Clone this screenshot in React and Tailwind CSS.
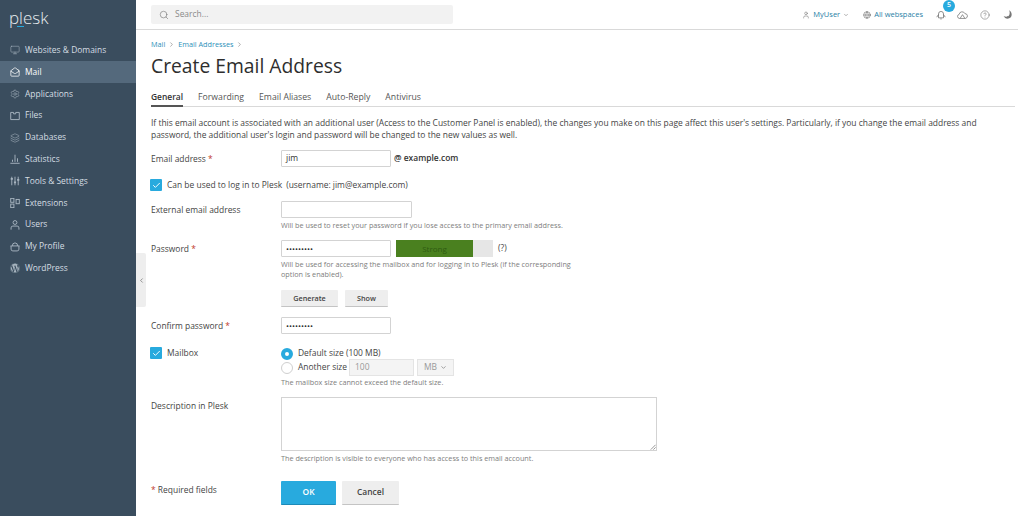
import React from 'react';
import {
  Monitor,
  MailOpen,
  Settings,
  Layers,
  User,
  Globe,
  CircleHelp,
  Search,
  ChevronDown,
  ChevronRight,
  ChevronLeft,
  Check,
} from 'lucide-react';
import { FaWordpress } from 'react-icons/fa';

function FilesIcon(props) {
  return (
    <svg viewBox="0 0 14 14" fill="none" stroke="currentColor" strokeWidth="1" {...props}>
      <path d="M1 2h4v2h3V2h5v10H1z" />
    </svg>
  );
}

function StatsIcon(props) {
  return (
    <svg viewBox="0 0 14 14" fill="none" stroke="currentColor" strokeWidth="1" {...props}>
      <path d="M0.5 13h13M3.5 11V8M7 11V1M10.5 11V6" />
    </svg>
  );
}

function ToolsIcon(props) {
  return (
    <svg viewBox="0 0 14 14" fill="none" stroke="currentColor" strokeWidth="1" {...props}>
      <path d="M2.5 1v12M7 1v12M11.5 1v12" />
      <path d="M1 4h3M5.5 9h3M10 5.5h3" strokeWidth="2.4" />
    </svg>
  );
}

function ExtensionsIcon(props) {
  return (
    <svg viewBox="0 0 14 14" fill="none" stroke="currentColor" strokeWidth="1" {...props}>
      <rect x="1" y="0.5" width="4.5" height="5.5" />
      <rect x="1" y="8.5" width="4.5" height="5" />
      <rect x="8.5" y="2" width="4.5" height="6" />
    </svg>
  );
}

function UsersIcon(props) {
  return (
    <svg viewBox="0 0 14 14" fill="none" stroke="currentColor" strokeWidth="1" {...props}>
      <circle cx="7" cy="3.5" r="2.7" />
      <path d="M1.5 13.5V11a2.5 2.5 0 0 1 2.5-2.5h6a2.5 2.5 0 0 1 2.5 2.5v2.5" />
    </svg>
  );
}

function ProfileIcon(props) {
  return (
    <svg viewBox="0 0 14 14" fill="none" stroke="currentColor" strokeWidth="1" {...props}>
      <path d="M0.7 5.5h12.6M1.5 5.5v4.5a2.5 2.5 0 0 0 2.5 2.5h6a2.5 2.5 0 0 0 2.5-2.5V5.5" />
      <path d="M3.5 5.5 4 2.5 7 1.2l3 1.3.5 3" />
    </svg>
  );
}

function NotifyIcon(props) {
  return (
    <svg viewBox="0 0 14 14" fill="none" stroke="currentColor" strokeWidth="1" {...props}>
      <path d="M3.5 11V5.5a3.5 3.5 0 0 1 7 0V11z" />
      <path d="M3.5 6.5 1 10M10.5 6.5 13 10M6 12.5h2" />
    </svg>
  );
}

function CloudIcon(props) {
  return (
    <svg viewBox="0 0 16 14" fill="none" stroke="currentColor" strokeWidth="1" {...props}>
      <path d="M4.5 12H3.5a3 3 0 0 1-.4-5.900A4.400 4.400 0 0 1 11.5 5a3.500 3.500 0 0 1 1.300 6.800L11.500 12" />
      <path d="M8 6.500 11.500 12H4.500z" />
    </svg>
  );
}

function MoonIcon(props) {
  return (
    <svg viewBox="0 0 14 14" fill="currentColor" {...props}>
      <path d="M9.500 0.500C12 1.800 13.500 4.200 13.500 7a6.500 6.500 0 0 1-12.500 2.500c3 1.300 7 1.200 8.300-1C10.700 6.300 10.800 3 9.500 0.500z" />
    </svg>
  );
}

function ResizeGrip(props) {
  return (
    <svg viewBox="0 0 8 8" fill="none" stroke="#777" strokeWidth="1" {...props}>
      <path d="M7.500 1 1 7.500M7.500 4.500 4.500 7.500" />
    </svg>
  );
}

const navItems = [
  { label: 'Websites & Domains', icon: Monitor },
  { label: 'Mail', icon: MailOpen, active: true },
  { label: 'Applications', icon: Settings },
  { label: 'Files', icon: FilesIcon },
  { label: 'Databases', icon: Layers },
  { label: 'Statistics', icon: StatsIcon },
  { label: 'Tools & Settings', icon: ToolsIcon },
  { label: 'Extensions', icon: ExtensionsIcon },
  { label: 'Users', icon: UsersIcon },
  { label: 'My Profile', icon: ProfileIcon },
  { label: 'WordPress', icon: FaWordpress },
];

const tabs = ['General', 'Forwarding', 'Email Aliases', 'Auto-Reply', 'Antivirus'];

function Sidebar() {
  return (
    <aside className="w-[136px] shrink-0 bg-[#3a4d5e] text-[#d5dde3]">
      <div className="h-[39.5px] pl-[9px] pt-[6px] relative">
        <span className="text-[17px] leading-[24px] font-light text-[#e8edf0]">plesk</span>
        <span className="absolute left-[17px] top-[26px] w-[7px] h-[1px] bg-[#28aade]"></span>
      </div>
      <nav>
        {navItems.map((item) => {
          const Icon = item.icon;
          return (
            <div
              key={item.label}
              className={`flex items-center h-[21.8px] pl-[10px] gap-[5px] text-[8.45px] ${item.active ? 'bg-[#54697c] text-white' : ''}`}
            >
              <Icon className={`w-[10px] h-[10px] shrink-0 ${item.active ? 'text-white' : 'text-[#a9b6c1]'}`} strokeWidth={item.active ? 1.8 : 1.3} />
              <span>{item.label}</span>
            </div>
          );
        })}
      </nav>
    </aside>
  );
}

function TopBar() {
  return (
    <header className="h-[30px] shrink-0 border-b border-[#d9d9d9] flex items-center pl-[15px] pr-[6px] bg-white">
      <div className="w-[302px] h-[19px] bg-[#f2f2f2] rounded-[2px] flex items-center pl-[8px] gap-[6px] text-[8.45px] text-[#8a8a8a]">
        <Search className="w-[10px] h-[10px] text-[#777]" strokeWidth={1.5} />
        <span>Search...</span>
      </div>
      <div className="ml-auto flex items-center text-[7.5px] text-[#2a7fa6]">
        <User className="w-[8px] h-[8px] text-[#666] mr-[3px]" strokeWidth={1.5} />
        <span>MyUser</span>
        <ChevronDown className="w-[6px] h-[6px] text-[#666] ml-[3px]" />
        <Globe className="w-[8px] h-[8px] text-[#555] ml-[14px] mr-[3px]" strokeWidth={1.5} />
        <span>All webspaces</span>
        <div className="relative ml-[13px]">
          <NotifyIcon className="w-[10px] h-[10px] text-[#666]" />
          <span className="absolute -top-[10px] left-[7px] w-[12px] h-[12px] rounded-full bg-[#28aade] text-white text-[7px] font-semibold flex items-center justify-center">5</span>
        </div>
        <CloudIcon className="w-[11px] h-[10px] text-[#666] ml-[11px]" />
        <CircleHelp className="w-[10px] h-[10px] text-[#666] ml-[12px]" strokeWidth={1.3} />
        <MoonIcon className="w-[9px] h-[9px] text-[#777] ml-[13px]" />
      </div>
    </header>
  );
}

function Req() {
  return <span className="text-[#c0392b]"> *</span>;
}

function Hint({ children, className = '' }) {
  return <div className={`text-[7.25px] leading-[10px] text-[#7d7d7d] ${className}`}>{children}</div>;
}

function TextBox({ value, className = '' }) {
  return (
    <div className={`h-[17px] border border-[#d3d3d3] rounded-[1px] bg-white px-[4px] flex items-center text-[8.45px] text-[#333] ${className}`}>
      {value}
    </div>
  );
}

function Row({ label, children, className = '' }) {
  return (
    <div className={`flex ${className}`}>
      <div className="w-[130px] shrink-0 text-[8.45px] leading-[17px] text-[#444]">{label}</div>
      <div className="flex-1 min-w-0">{children}</div>
    </div>
  );
}

function CheckBox() {
  return (
    <span className="w-[12px] h-[12px] -ml-[1px] shrink-0 bg-[#28aade] rounded-[1px] flex items-center justify-center">
      <Check className="w-[9px] h-[9px] text-white" strokeWidth={2.5} />
    </span>
  );
}

function GrayButton({ children, className = '' }) {
  return (
    <button className={`bg-[#eeeeee] border-b border-[#c4c4c4] rounded-[1px] font-semibold text-[#444] ${className}`}>
      {children}
    </button>
  );
}

function Form() {
  return (
    <main className="flex-1 min-w-0 pl-[15px] pr-[3px] text-[#444]">
      <div className="flex items-center mt-[9px] h-[10px] text-[7.25px] text-[#2a8fb8]">
        <span>Mail</span>
        <ChevronRight className="w-[7px] h-[7px] text-[#777] mx-[3px]" />
        <span>Email Addresses</span>
        <ChevronRight className="w-[7px] h-[7px] text-[#777] mx-[3px]" />
      </div>
      <h1 className="mt-[3px] text-[19.3px] leading-[27px] text-[#2e2e2e]">Create Email Address</h1>

      <div className="flex gap-[15px] mt-[11px] h-[17px] border-b border-[#d9d9d9] text-[8.7px]">
        {tabs.map((tab, i) => (
          <div
            key={tab}
            className={`h-[17px] leading-[14px] ${i === 0 ? 'text-[8.45px] font-semibold text-[#333] border-b-[2px] border-[#555]' : 'text-[#555]'}`}
          >
            {tab}
          </div>
        ))}
      </div>

      <p className="mt-[10px] text-[8.45px] leading-[12px] text-[#444]">
        If this email account is associated with an additional user (Access to the Customer Panel is enabled), the changes you make on this page affect this user's settings. Particularly, if you change the email address and password, the additional user's login and password will be changed to the new values as well.
      </p>

      <Row className="mt-[9px]" label={<>Email address<Req /></>}>
        <div className="flex items-center">
          <TextBox value="jim" className="w-[110px]" />
          <span className="ml-[3px] text-[8.45px] font-semibold text-[#333]">@ example.com</span>
        </div>
      </Row>

      <div className="flex items-center mt-[11px] h-[14px] text-[8.45px]">
        <CheckBox />
        <span className="ml-[5px]">Can be used to log in to Plesk</span>
        <span className="ml-[4px]">(username: jim@example.com)</span>
      </div>

      <Row className="mt-[9px]" label="External email address">
        <TextBox className="w-[131px]" />
        <Hint className="mt-[2px]">Will be used to reset your password if you lose access to the primary email address.</Hint>
      </Row>

      <Row className="mt-[10px]" label={<>Password<Req /></>}>
        <div className="flex items-center">
          <TextBox value="•••••••••" className="w-[110px] !text-[8px]" />
          <div className="ml-[5px] w-[97px] h-[17px] bg-[#e6e6e6]">
            <div className="w-[77px] h-full bg-[#4a801f] text-center text-[8px] leading-[17px] text-[#2f5c12]">Strong</div>
          </div>
          <span className="ml-[5px] text-[8.45px]">(?)</span>
        </div>
        <Hint className="mt-[2px] w-[295px]">Will be used for accessing the mailbox and for logging in to Plesk (if the corresponding option is enabled).</Hint>
        <div className="flex gap-[7px] mt-[11px]">
          <GrayButton className="w-[57px] h-[17px] text-[7.25px]">Generate</GrayButton>
          <GrayButton className="w-[43px] h-[17px] text-[7.25px]">Show</GrayButton>
        </div>
      </Row>

      <Row className="mt-[10px]" label={<>Confirm password<Req /></>}>
        <TextBox value="•••••••••" className="w-[110px] !text-[8px]" />
      </Row>

      <div className="flex mt-[12px]">
        <div className="w-[130px] shrink-0 flex items-center h-[14px] text-[8.45px]">
          <CheckBox />
          <span className="ml-[5px]">Mailbox</span>
        </div>
        <div>
          <div className="flex items-center h-[13px] pt-[2px] text-[8.45px]">
            <span className="w-[12px] h-[12px] rounded-full border-[4px] border-[#28aade] bg-white"></span>
            <span className="ml-[5px]">Default size (100 MB)</span>
          </div>
          <div className="flex items-center h-[17px] text-[8.45px]">
            <span className="w-[12px] h-[12px] rounded-full border border-[#cfcfcf] bg-white"></span>
            <span className="ml-[5px]">Another size</span>
            <div className="ml-[2px] w-[65px] h-[17px] bg-[#f4f4f4] border border-[#e4e4e4] flex items-center px-[5px] text-[#999]">100</div>
            <div className="ml-[3px] w-[37px] h-[17px] bg-[#f4f4f4] border border-[#e4e4e4] flex items-center justify-between px-[6px] text-[#999]">
              MB
              <ChevronDown className="w-[7px] h-[7px] text-[#666]" />
            </div>
          </div>
          <Hint className="mt-[1px]">The mailbox size cannot exceed the default size.</Hint>
        </div>
      </div>

      <Row className="mt-[10px]" label="Description in Plesk">
        <div className="relative w-[376px] h-[54px] border border-[#d3d3d3] bg-white">
          <ResizeGrip className="absolute right-0 bottom-0 w-[6px] h-[6px]" />
        </div>
        <Hint className="mt-[2px]">The description is visible to everyone who has access to this email account.</Hint>
      </Row>

      <div className="flex mt-[18px]">
        <div className="w-[130px] shrink-0 text-[8.45px] leading-[17px]"><span className="text-[#c0392b]">*</span> Required fields</div>
        <div className="flex gap-[6px]">
          <button className="w-[55px] h-[24px] bg-[#28aade] border-b border-[#1d8ab8] rounded-[1px] text-[8.45px] font-semibold text-white">OK</button>
          <GrayButton className="w-[57px] h-[24px] text-[8.45px]">Cancel</GrayButton>
        </div>
      </div>
    </main>
  );
}

export default function App() {
  return (
    <div className="relative flex h-[516px] w-[1018px] overflow-hidden bg-white font-['Open_Sans',sans-serif]">
      <Sidebar />
      <div className="flex-1 min-w-0 flex flex-col">
        <TopBar />
        <Form />
      </div>
      <div className="absolute left-[136px] top-[253px] w-[10px] h-[54px] bg-[#eeeeee] rounded-r-[2px] flex items-center justify-center">
        <ChevronLeft className="w-[7px] h-[7px] text-[#555]" strokeWidth={2} />
      </div>
    </div>
  );
}
